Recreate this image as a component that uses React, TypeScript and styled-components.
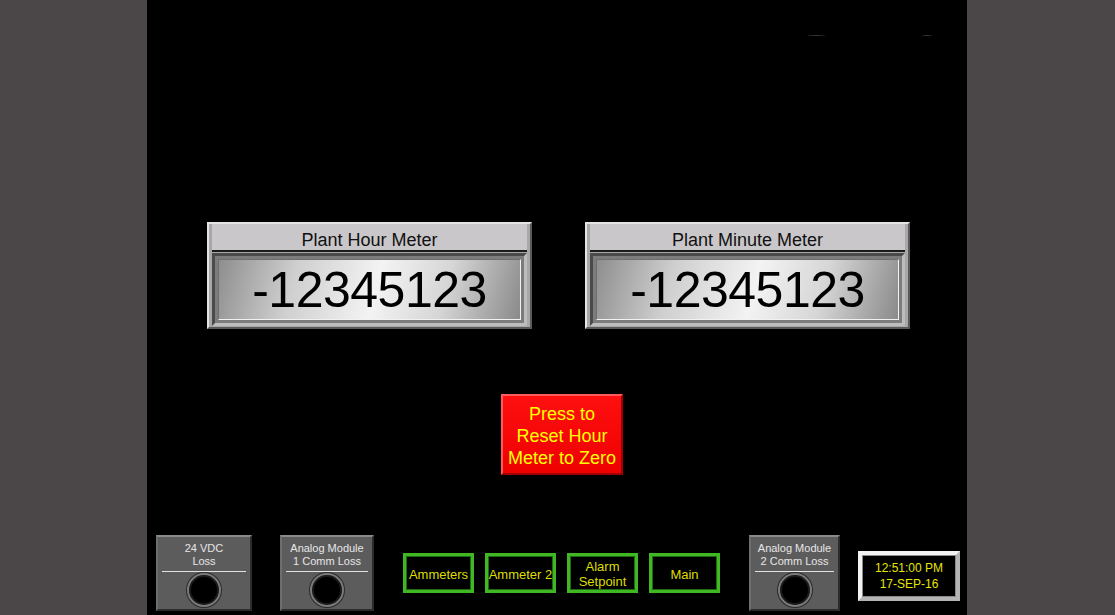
import React from 'react';
import styled, { createGlobalStyle } from 'styled-components';

const GlobalStyle = createGlobalStyle`
  html, body {
    margin: 0;
    padding: 0;
    background: #4b4748;
    font-family: "Liberation Sans", Arial, sans-serif;
  }
`;

interface AlarmProps {
  lines: [string, string];
  width: number;
  offset: number;
}

const AlarmTile: React.FC<AlarmProps> = ({ lines, width, offset }) => (
  <AlarmBox $w={width} $ml={offset}>
    <AlarmLabel>
      {lines[0]}
      <br />
      {lines[1]}
    </AlarmLabel>
    <AlarmRule />
    <Lamp />
  </AlarmBox>
);

const Meter: React.FC<{ title: string; value: string }> = ({ title, value }) => (
  <MeterFrame>
    <MeterTitle>{title}</MeterTitle>
    <ValueWell>
      <ValueFace>{value}</ValueFace>
    </ValueWell>
  </MeterFrame>
);

const App: React.FC = () => {
  return (
    <Page>
      <GlobalStyle />
      <Panel>
        <TopMarks>
          <Mark $w={17} />
          <Mark $w={10} />
        </TopMarks>
        <MeterRow>
          <Meter title="Plant Hour Meter" value="-12345123" />
          <Meter title="Plant Minute Meter" value="-12345123" />
        </MeterRow>
        <ResetButton>
          Press to
          <br />
          Reset Hour
          <br />
          Meter to Zero
        </ResetButton>
        <BottomBar>
          <AlarmTile lines={['24 VDC', 'Loss']} width={96} offset={0} />
          <AlarmTile lines={['Analog Module', '1 Comm Loss']} width={94} offset={28} />
          <NavGroup>
            <NavButton>Ammeters</NavButton>
            <NavButton>Ammeter 2</NavButton>
            <NavButton>
              Alarm
              <br />
              Setpoint
            </NavButton>
            <NavButton>Main</NavButton>
          </NavGroup>
          <AlarmTile lines={['Analog Module', '2 Comm Loss']} width={91} offset={29} />
          <Clock>
            12:51:00 PM
            <br />
            17-SEP-16
          </Clock>
        </BottomBar>
      </Panel>
    </Page>
  );
};

export default App;

const Page = styled.div`
  width: 1115px;
  height: 615px;
  display: flex;
  justify-content: center;
  overflow: hidden;
`;

const Panel = styled.div`
  width: 820px;
  height: 615px;
  margin-left: -1px;
  background: #000;
  display: flex;
  flex-direction: column;
`;

const TopMarks = styled.div`
  display: flex;
  gap: 97px;
  height: 1px;
  margin-top: 35px;
  padding-left: 661px;
`;

const Mark = styled.div<{ $w: number }>`
  width: ${(p) => p.$w}px;
  height: 1px;
  background: linear-gradient(90deg, #111, #3a3a3a 50%, #111);
`;

const MeterRow = styled.div`
  display: flex;
  gap: 53px;
  margin-top: 186px;
  padding-left: 60px;
`;

const MeterFrame = styled.div`
  width: 325px;
  height: 107px;
  box-sizing: border-box;
  background: #a8a8a8;
  border: 2px solid;
  border-color: #e4e4e4 #5a5a5a #5a5a5a #e4e4e4;
  padding: 0 3px 3px;
  display: flex;
  flex-direction: column;
`;

const MeterTitle = styled.div`
  height: 26px;
  background: #c9c7c9;
  border-bottom: 2px solid #1a1a1a;
  color: #111;
  font-size: 18px;
  line-height: 32px;
  text-align: center;
`;

const ValueWell = styled.div`
  flex: 1;
  margin-top: 1px;
  background: #7c7c7c;
  border: 3px solid;
  border-color: #4a4a4a #bdbdbd #bdbdbd #4a4a4a;
  padding: 3px;
  display: flex;
`;

const ValueFace = styled.div`
  flex: 1;
  border: 1px solid;
  border-color: #6e6e6e #f2f2f2 #f2f2f2 #6e6e6e;
  background: linear-gradient(
    105deg,
    #8e8e8e 0%,
    #cfcfcf 25%,
    #f3f3f3 52%,
    #d6d6d6 74%,
    #8a8a8a 100%
  );
  display: flex;
  align-items: center;
  justify-content: center;
  color: #000;
  font-size: 50px;
  letter-spacing: -0.5px;
  padding-top: 1px;
`;

const ResetButton = styled.div`
  width: 122px;
  height: 81px;
  box-sizing: border-box;
  margin: 65px 0 0 354px;
  background: linear-gradient(180deg, #ff1010, #ee0000);
  border: 2px solid;
  border-color: #ff5a5a #a00000 #a00000 #ff5a5a;
  color: #ffff00;
  font-size: 18px;
  line-height: 22px;
  text-align: center;
  padding-top: 7px;
`;

const BottomBar = styled.div`
  display: flex;
  align-items: flex-start;
  margin-top: 60px;
  padding-left: 9px;
`;

const AlarmBox = styled.div<{ $w: number; $ml: number }>`
  width: ${(p) => p.$w}px;
  height: 76px;
  box-sizing: border-box;
  margin-left: ${(p) => p.$ml}px;
  background: #5d5c5d;
  border: 2px solid;
  border-color: #8c8b8c #2c2c2c #2c2c2c #6f6e6f;
  display: flex;
  flex-direction: column;
  align-items: center;
  padding-top: 5px;
`;

const AlarmLabel = styled.div`
  color: #e6e6e6;
  font-size: 11px;
  line-height: 13px;
  text-align: center;
`;

const AlarmRule = styled.div`
  align-self: stretch;
  height: 1px;
  background: #e2e2e2;
  margin: 3px 4px 1px;
`;

const Lamp = styled.div`
  width: 30px;
  height: 30px;
  border-radius: 50%;
  background: #000;
  border: 2px solid #7a7a7a;
  box-shadow: 0 0 0 1px #2a2a2a, inset 0 0 0 2px #1a1a1a;
`;

const NavGroup = styled.div`
  display: flex;
  gap: 11px;
  margin: 18px 0 0 29px;
`;

const NavButton = styled.div`
  width: 71px;
  height: 40px;
  box-sizing: border-box;
  background: #000;
  border: 3px solid #3fb824;
  box-shadow: inset 0 0 0 1px #1f6a12;
  color: #dede00;
  font-size: 13px;
  line-height: 15px;
  display: flex;
  align-items: center;
  justify-content: center;
  text-align: center;
  padding-top: 2px;
`;

const Clock = styled.div`
  width: 102px;
  height: 50px;
  box-sizing: border-box;
  margin: 16px 0 0 18px;
  background: #000;
  border: 4px solid;
  border-color: #f2f2f2 #b4b4b4 #b4b4b4 #f2f2f2;
  box-shadow: inset 0 0 0 1px #8a8a8a;
  color: #e6e600;
  font-size: 12px;
  line-height: 16px;
  display: flex;
  align-items: center;
  justify-content: center;
  text-align: center;
`;
